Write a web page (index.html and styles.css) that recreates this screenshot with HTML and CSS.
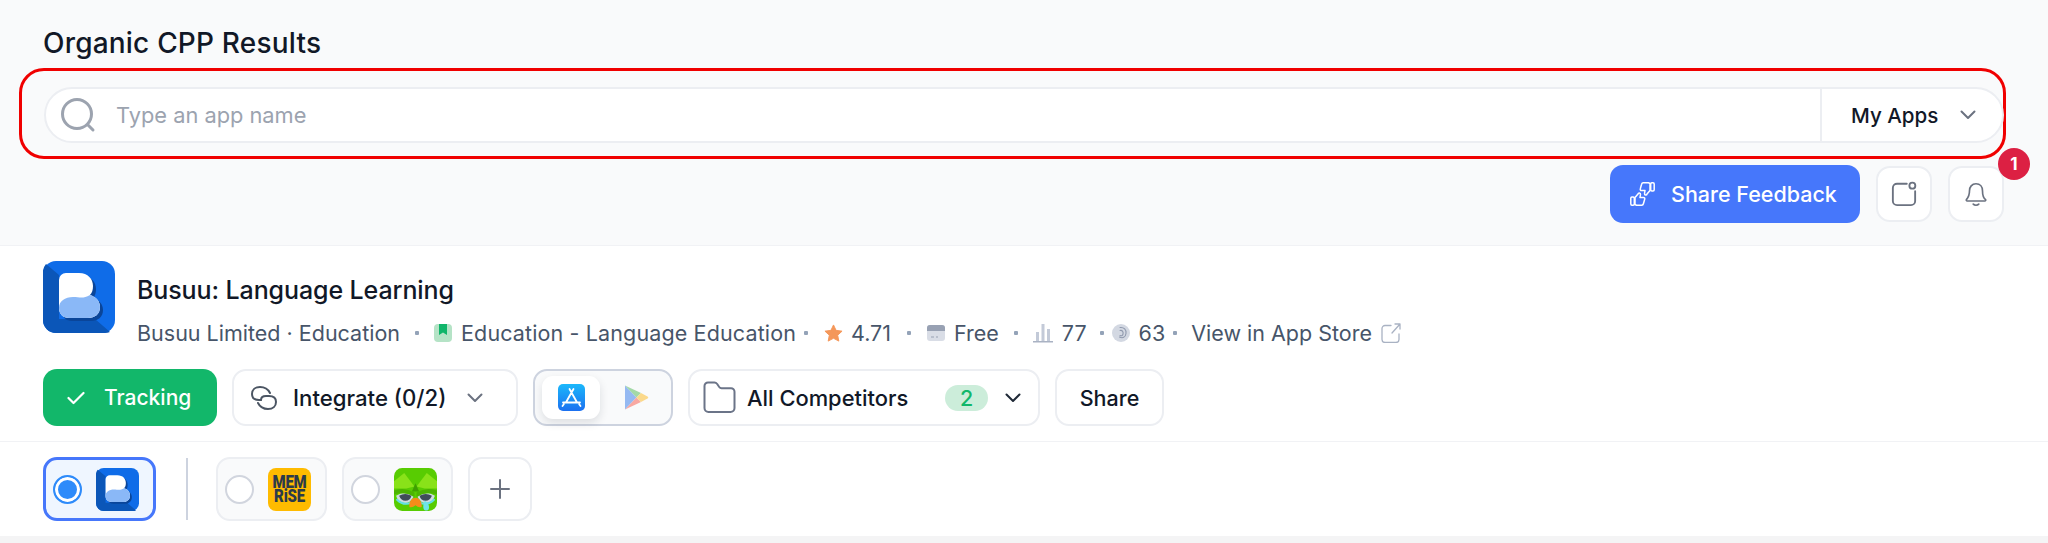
FILE: index.html
```html
<!DOCTYPE html>
<html lang="en">
<head>
<meta charset="utf-8">
<title>Organic CPP Results</title>
<link rel="stylesheet" href="styles.css">
</head>
<body>
<header class="top">
  <h1 class="page-title">Organic CPP Results</h1>
  <div class="highlight">
    <div class="search">
      <svg class="search-icon" viewBox="0 0 36 36" fill="none"><circle cx="17" cy="17" r="14.5" stroke="#9ca3af" stroke-width="3"/><path d="M28 28l5 5" stroke="#9ca3af" stroke-width="3" stroke-linecap="round"/></svg>
      <input class="search-input" type="text" placeholder="Type an app name">
      <div class="search-scope">
        <span>My Apps</span>
        <svg class="chev" viewBox="0 0 16 10" fill="none"><path d="M1.500 1.500L8 8l6.500-6.500" stroke="#6b7280" stroke-width="2" stroke-linecap="round" stroke-linejoin="round"/></svg>
      </div>
    </div>
  </div>
  <div class="actions">
    <button class="feedback">
      <svg class="feedback-icon" viewBox="0 0 25 24" fill="none" stroke="#fff" stroke-width="1.500" stroke-linejoin="round" stroke-linecap="round">
        <g id="thumb"><rect x="0.800" y="15" width="3.500" height="8.200" rx="1.200"/><path d="M5 15.500l3-3.500c.3-1.500 2.600-1.500 2.500.5L10 15.500h3.500c1 0 1.500.8 1.200 1.700l-1.300 4.600c-.2.800-.8 1.400-1.600 1.400H6.500L5 22.500z"/></g>
        <use href="#thumb" transform="rotate(180 12.500 12)"/>
      </svg>
      <span>Share Feedback</span>
    </button>
    <button class="icon-btn">
      <svg class="icon-24" viewBox="0 0 28 28" fill="none" stroke="#6b7280" stroke-width="2"><path d="M17 3H6.500A4.500 4.500 0 0 0 2 7.500v14A4.500 4.500 0 0 0 6.500 26h15a4.500 4.500 0 0 0 4.500-4.500V11" stroke-linecap="round"/><circle cx="23" cy="5" r="3.200"/></svg>
    </button>
    <div class="bell-wrap">
      <button class="icon-btn">
        <svg class="icon-24" viewBox="0 0 28 28" fill="none" stroke="#6b7280" stroke-width="1.800" stroke-linejoin="round"><path d="M14 3c-4.500 0-7 3.500-7 7.500 0 5-1.500 7.500-3.300 9.500-.5.600 0 1.500.8 1.500h19c.8 0 1.300-.9.800-1.500C21.500 18 21 15.500 21 10.500 21 6.500 18.500 3 14 3z"/><path d="M11 25c1.500 1.500 4.500 1.500 6 0" stroke-linecap="round"/></svg>
      </button>
      <span class="badge">1</span>
    </div>
  </div>
</header>

<section class="app">
  <div class="app-head">
    <svg class="app-logo" viewBox="0 0 72 72"><use href="#busuu"/></svg>
    <div class="app-text">
      <h2 class="app-name">Busuu: Language Learning</h2>
      <div class="meta">
        <span>Busuu Limited · Education</span>
        <i class="dot"></i>
        <svg class="meta-icon" viewBox="0 0 18 18"><rect width="18" height="18" rx="4" fill="#b5e3c6"/><path d="M5 0h8v11l-4-2.500L5 11z" fill="#10b56a"/></svg>
        <span class="genre">Education - Language Education</span>
        <i class="dot snug"></i>
        <svg class="meta-icon star" viewBox="0 0 20 20"><path d="M10 1l2.700 5.700 6.300.8-4.600 4.300 1.200 6.200L10 15l-5.600 3 1.200-6.200L1 7.500l6.300-.8z" fill="#f4975a" stroke="#f4975a" stroke-linejoin="round"/></svg>
        <span>4.71</span>
        <i class="dot wider"></i>
        <svg class="meta-icon" viewBox="0 0 18 18"><rect y="1" width="18" height="16" rx="3" fill="#d9dde6"/><path d="M0 4a3 3 0 0 1 3-3h12a3 3 0 0 1 3 3v3H0z" fill="#98a1b3"/><path d="M4 13h3M9 13h2" stroke="#98a1b3"/></svg>
        <span>Free</span>
        <i class="dot"></i>
        <svg class="meta-icon wide" viewBox="0 0 20 20" fill="#c3cad8"><rect x="3" y="9" width="3" height="9"/><rect x="8.500" y="1" width="3" height="17"/><rect x="14" y="6" width="3" height="12"/><rect y="18" width="20" height="1.500" fill="#a9b2c3"/></svg>
        <span>77</span>
        <i class="dot close"></i>
        <svg class="meta-icon" viewBox="0 0 18 18" fill="none"><circle cx="9" cy="9" r="9" fill="#d3d8e2"/><path d="M8 3.500c4-.5 6.500 2 6 6S10.500 14.500 7.500 13M8 6.500c2.500-.5 3.500 1.500 3 3.500S9.500 12 8 11.500" stroke="#8f99ad" stroke-width="1.100" stroke-linecap="round"/></svg>
        <span>63</span>
        <i class="dot tight"></i>
        <a class="store-link">View in App Store</a>
        <svg class="ext" viewBox="0 0 20 20" fill="none" stroke="#a9b2c3" stroke-width="1.300" stroke-linecap="round" stroke-linejoin="round"><path d="M10 2.500H4A3 3 0 0 0 1 5.500v11a3 3 0 0 0 3 3h11a3 3 0 0 0 3-3V11"/><path d="M11 10l8-9M14 1h5v5"/></svg>
      </div>
    </div>
  </div>
  <div class="toolbar">
    <button class="track">
      <svg class="track-check" viewBox="0 0 18 14" fill="none"><path d="M1.500 7l5 5L16.500 2" stroke="#fff" stroke-width="2.200" stroke-linecap="round" stroke-linejoin="round"/></svg>
      <span>Tracking</span>
    </button>
    <button class="tool integrate">
      <svg class="link-icon" viewBox="0 0 26 24" fill="none" stroke="#4b5563" stroke-width="2" stroke-linecap="round"><path d="M19 7C17 3 13 1 9 1 4 1 1 4 1 8s3 6 7 6h2"/><path d="M7 17c2 4 6 6 10 6 5 0 8-3 8-7s-3-6-7-6h-3c-3 0-5 1.500-5 4"/></svg>
      <span>Integrate (0/2)</span>
      <svg class="chev" viewBox="0 0 16 10" fill="none"><path d="M1.500 1.500L8 8l6.500-6.500" stroke="#6b7280" stroke-width="2" stroke-linecap="round" stroke-linejoin="round"/></svg>
    </button>
    <div class="stores">
      <span class="store active">
        <svg class="store-icon" viewBox="0 0 27 27"><defs><linearGradient id="as" x1="0" y1="0" x2="0" y2="1"><stop offset="0" stop-color="#1bb8fb"/><stop offset="1" stop-color="#1c70f0"/></linearGradient></defs><rect width="27" height="27" rx="5" fill="url(#as)"/><path d="M15.500 5l-7.300 13M11.500 5l7.300 13M5 18.500h17M4.500 22l1.300-1.800M22.500 22l-1.300-1.800" stroke="#fff" stroke-width="1.800" stroke-linecap="round" fill="none"/></svg>
      </span>
      <span class="store">
        <svg class="store-icon" viewBox="0 0 27 27"><path d="M3 1.500v24L14.500 13.500z" fill="#95b9f2"/><path d="M3 1.500l11.500 12 4.500-4.500z" fill="#a3d9a7"/><path d="M3 25.500l11.500-12 4.500 4.500z" fill="#f8a8a2"/><path d="M19 9l6.500 3.500c1 .6 1 1.400 0 2L19 18l-4.500-4.500z" fill="#fbd98b"/></svg>
      </span>
    </div>
    <button class="tool competitors">
      <svg class="folder" viewBox="0 0 33 33" fill="none"><path d="M1.500 5a3.500 3.500 0 0 1 3.500-3.500h6.500c1.200 0 2 .6 2.700 1.500l2 3c.6.800 1.300 1.200 2.300 1.200H28A3.500 3.500 0 0 1 31.500 10.700V27A4 4 0 0 1 27.500 31H5.500a4 4 0 0 1-4-4z" stroke="#6b7488" stroke-width="2"/></svg>
      <span class="comp-label">All Competitors</span>
      <span class="count">2</span>
      <svg class="chev dark" viewBox="0 0 16 10" fill="none"><path d="M1.500 1.500L8 8l6.500-6.500" stroke="#1f2937" stroke-width="2" stroke-linecap="round" stroke-linejoin="round"/></svg>
    </button>
    <button class="tool share">Share</button>
  </div>
</section>

<section class="compare">
  <label class="pick selected">
    <span class="radio on"></span>
    <svg class="pick-logo" viewBox="0 0 72 72"><use href="#busuu"/></svg>
  </label>
  <span class="vline"></span>
  <label class="pick">
    <span class="radio"></span>
    <span class="memrise"><span class="mem-text"><span>MEM</span><span>RiSE</span></span></span>
  </label>
  <label class="pick">
    <span class="radio"></span>
    <svg class="pick-logo" viewBox="4 4 42 42">
      <rect x="4" y="4" width="42" height="42" rx="8" fill="#58cc02"/>
      <path d="M4 17L14 9l10 13-8 2H4z" fill="#89e219"/>
      <path d="M46 17L36 9 26 22l8 2h12z" fill="#89e219"/>
      <path d="M25 19l-3.500 8h7z" fill="#3f9f02"/>
      <g id="duo-eye">
        <path d="M6 31q9-5 17 1-3 7-10 6-5-1-7-7z" fill="#cfdce3"/>
        <path d="M9 31q6-3 12 0-1 5-6 5-4 0-6-5z" fill="#3f4c5a"/>
        <path d="M4 30q10-4 20 2v-4Q14 22 4 26z" fill="#4cb302"/>
        <path d="M7 35q6 6 14 3" stroke="#62e0e6" stroke-width="2" fill="none" stroke-linecap="round"/>
      </g>
      <use href="#duo-eye" transform="matrix(-1 0 0 1 50 0)"/>
      <path d="M25 33c-3 0-5 2-6 6v3c2 1 4 0 6-1.500 2 1.500 4 2.500 6 1.500v-3c-1-4-3-6-6-6z" fill="#f58c1a"/>
      <path d="M34 36c3 1 5 5 4 8-1 2-4 2-5 0-1-3 0-5 1-8z" fill="#6fe4e6"/>
    </svg>
  </label>
  <button class="add" aria-label="Add">
    <svg class="plus" viewBox="0 0 20 20" fill="none"><path d="M10 1v18M1 10h18" stroke="#6b7280" stroke-width="2" stroke-linecap="round"/></svg>
  </button>
</section>
<div class="footer-bar"></div>

<svg class="defs" width="0" height="0">
  <defs>
    <g id="busuu">
      <rect width="72" height="72" rx="13" fill="#0f6ce8"/>
      <path d="M3 3l13 11v44h36l15 13a13 13 0 0 1-5 1H13A13 13 0 0 1 0 59V13a13 13 0 0 1 3-10z" fill="#0b56b8"/>
      <path transform="translate(3 3)" d="M16 19a7 7 0 0 1 7-7h13c9 0 14 6 14 13 0 4-1 7-3 9 6 2 10 6 10 12 0 7-5 11-12 11H26c-6 0-10-4-10-10z" fill="#0a4599"/>
      <path d="M16 19a7 7 0 0 1 7-7h13c9 0 14 6 14 13 0 4-1 7-3 9 6 2 10 6 10 12 0 7-5 11-12 11H26c-6 0-10-4-10-10z" fill="#fff"/>
      <path d="M16 47c0-7 6-11 14-11 7 0 10 2 17-2 6 2 10 6 10 12 0 7-5 11-12 11H26c-6 0-10-4-10-10z" fill="#8ab8f7"/>
    </g>
  </defs>
</svg>
</body>
</html>
```

FILE: styles.css
```css
* { box-sizing: border-box; }
html, body { margin: 0; padding: 0; }
body {
  width: 2048px;
  height: 543px;
  overflow: hidden;
  background: #fff;
  font-family: "Inter", "Noto Sans", sans-serif;
  color: #111827;
}
button { font: inherit; cursor: pointer; }

.top {
  background: #f9fafb;
  padding-top: 27px;
  padding-bottom: 22px;
  border-bottom: 1px solid #f1f2f5;
}
.page-title {
  margin: 0 0 9px 43px;
  font-size: 28px;
  line-height: 32px;
  font-weight: 500;
  letter-spacing: .2px;
  color: #111827;
}
.highlight {
  margin: 0 42px 0 19px;
  height: 91px;
  border: 3px solid #f00000;
  border-radius: 25px;
  padding: 16px 1px 0 22px;
}
.search {
  display: flex;
  align-items: center;
  height: 56px;
  margin-right: -2px;
  background: #fff;
  border: 2px solid #eceef2;
  border-radius: 28px;
}
.search-icon { width: 36px; height: 36px; margin-left: 14px; flex: none; }
.search-input {
  flex: 1;
  border: 0;
  outline: 0;
  background: transparent;
  margin-left: 18px;
  font: inherit;
  font-size: 21.800px;
  color: #111827;
}
.search-input::placeholder { color: #9ca3af; opacity: 1; }
.search-scope {
  width: 182px;
  height: 100%;
  flex: none;
  display: flex;
  align-items: center;
  gap: 22px;
  padding-left: 29px;
  border-left: 2px solid #eceef2;
  font-size: 20.600px;
  font-weight: 500;
}
.chev { width: 16px; height: 10px; flex: none; }

.actions {
  display: flex;
  justify-content: flex-end;
  align-items: center;
  gap: 16px;
  margin-top: 6px;
  padding-right: 44px;
}
.feedback {
  display: flex;
  align-items: center;
  gap: 16px;
  height: 58px;
  width: 250px;
  padding: 0 0 0 20px;
  border: 0;
  border-radius: 13px;
  background: #4677fb;
  color: #fff;
  font-size: 21.500px;
  font-weight: 500;
}
.feedback-icon { width: 25px; height: 24px; flex: none; }
.icon-btn {
  display: flex;
  align-items: center;
  justify-content: center;
  width: 56px;
  height: 56px;
  padding: 0;
  background: #fff;
  border: 2px solid #eceef2;
  border-radius: 14px;
}
.icon-24 { width: 26px; height: 26px; }
.bell-wrap { position: relative; }
.badge {
  position: absolute;
  top: -18px;
  right: -26px;
  width: 32px;
  height: 32px;
  border-radius: 50%;
  background: #dc2043;
  color: #fff;
  display: flex;
  align-items: center;
  justify-content: center;
  font-size: 17px;
  font-weight: 700;
}

.app { padding: 15px 43px; border-bottom: 1px solid #f1f2f5; }
.app-head { display: flex; gap: 23px; height: 72px; }
.app-logo { width: 72px; height: 72px; flex: none; }
.app-text { padding-top: 13px; }
.app-name {
  margin: 0 0 13px -1px;
  font-size: 25px;
  line-height: 32px;
  font-weight: 500;
  letter-spacing: -.1px;
  color: #111827;
}
.meta {
  display: flex;
  align-items: center;
  height: 28px;
  margin-left: -1px;
  font-size: 21.500px;
  color: #475569;
  white-space: nowrap;
}
.genre { letter-spacing: .13px; }
.dot { width: 4px; height: 4px; border-radius: 1px; background: #94a3b8; flex: none; margin: 0 15px; }
.dot.wider { margin: 0 16px; }
.dot.snug { margin: 0 16px 0 8px; }
.dot.close { margin: 0 8px 0 13px; }
.dot.tight { margin: 0 14px 0 8px; }
.meta-icon { width: 18px; height: 18px; flex: none; margin-right: 9px; }
.meta-icon.wide { width: 20px; height: 20px; }
.meta-icon.star { width: 19px; height: 19px; margin-right: 8px; }
.store-link { color: #475569; }
.ext { width: 20px; height: 20px; margin-left: 9px; flex: none; }

.toolbar { display: flex; align-items: center; gap: 15px; margin-top: 36px; height: 57px; }
.track {
  display: flex;
  align-items: center;
  gap: 19px;
  width: 174px;
  height: 57px;
  padding: 0 0 0 24px;
  border: 0;
  border-radius: 14px;
  background: #12b76a;
  color: #fff;
  font-size: 21px;
  font-weight: 500;
}
.track-check { width: 18px; height: 14px; flex: none; }
.tool {
  display: flex;
  align-items: center;
  height: 57px;
  background: #fff;
  border: 2px solid #eceef2;
  border-radius: 14px;
  font-size: 21.500px;
  font-weight: 500;
  color: #111827;
}
.integrate { width: 286px; padding: 0 0 0 17px; gap: 16px; }
.integrate span { font-size: 22.200px; }
.integrate .chev { margin-left: 5px; }
.link-icon { width: 26px; height: 24px; flex: none; }
.stores {
  display: flex;
  align-items: center;
  justify-content: space-between;
  width: 140px;
  height: 57px;
  padding: 6px 7px;
  background: #f9fafb;
  border: 2px solid #cdd3df;
  border-radius: 14px;
}
.store { display: flex; align-items: center; justify-content: center; width: 58px; height: 43px; }
.store.active { background: #fff; border-radius: 11px; box-shadow: 0 4px 10px rgba(15, 23, 42, .12); }
.store-icon { width: 27px; height: 27px; }
.competitors { width: 352px; padding: 0 0 0 13px; }
.folder { width: 33px; height: 33px; flex: none; }
.comp-label { margin-left: 11px; width: 198px; text-align: left; font-size: 21.900px; }
.count {
  width: 43px;
  height: 26px;
  display: flex;
  align-items: center;
  justify-content: center;
  border-radius: 13px;
  background: #ccedda;
  color: #12b76a;
}
.chev.dark { margin-left: 17px; }
.share { width: 109px; justify-content: center; }

.compare { display: flex; align-items: center; gap: 15px; padding: 15px 43px; height: 94px; }
.pick {
  display: flex;
  align-items: center;
  gap: 14px;
  width: 111px;
  height: 64px;
  padding-left: 7px;
  background: #f9fafb;
  border: 2px solid #eceef2;
  border-radius: 14px;
}
.pick.selected { width: 113px; background: #eff6ff; border: 3px solid #4677fb; padding-left: 7px; margin-right: 15px; }
.radio {
  width: 29px;
  height: 29px;
  flex: none;
  border-radius: 50%;
  background: #fff;
  border: 2px solid #d1d5de;
}
.radio.on { border-color: #2e8bfa; background: #2e8bfa; box-shadow: inset 0 0 0 3px #fff; }
.pick-logo { width: 43px; height: 43px; flex: none; }
.memrise {
  width: 43px;
  height: 43px;
  flex: none;
  display: flex;
  align-items: center;
  justify-content: center;
  border-radius: 8px;
  background: #ffbb00;
}
.mem-text {
  display: flex;
  flex-direction: column;
  align-items: center;
  color: #2b3a4a;
  font-family: "Roboto", "Inter", sans-serif;
  font-size: 15px;
  line-height: 12px;
  font-weight: 900;
  letter-spacing: -.2px;
  transform: scaleY(1.200);
}
.vline { width: 2px; height: 62px; background: #cdd3df; flex: none; margin-right: 13px; }
.add {
  display: flex;
  align-items: center;
  justify-content: center;
  width: 64px;
  height: 64px;
  padding: 0;
  background: #fff;
  border: 2px solid #eceef2;
  border-radius: 14px;
}
.plus { width: 20px; height: 20px; }
.footer-bar { height: 7px; background: #f4f4f5; }
.defs { position: absolute; }
```
